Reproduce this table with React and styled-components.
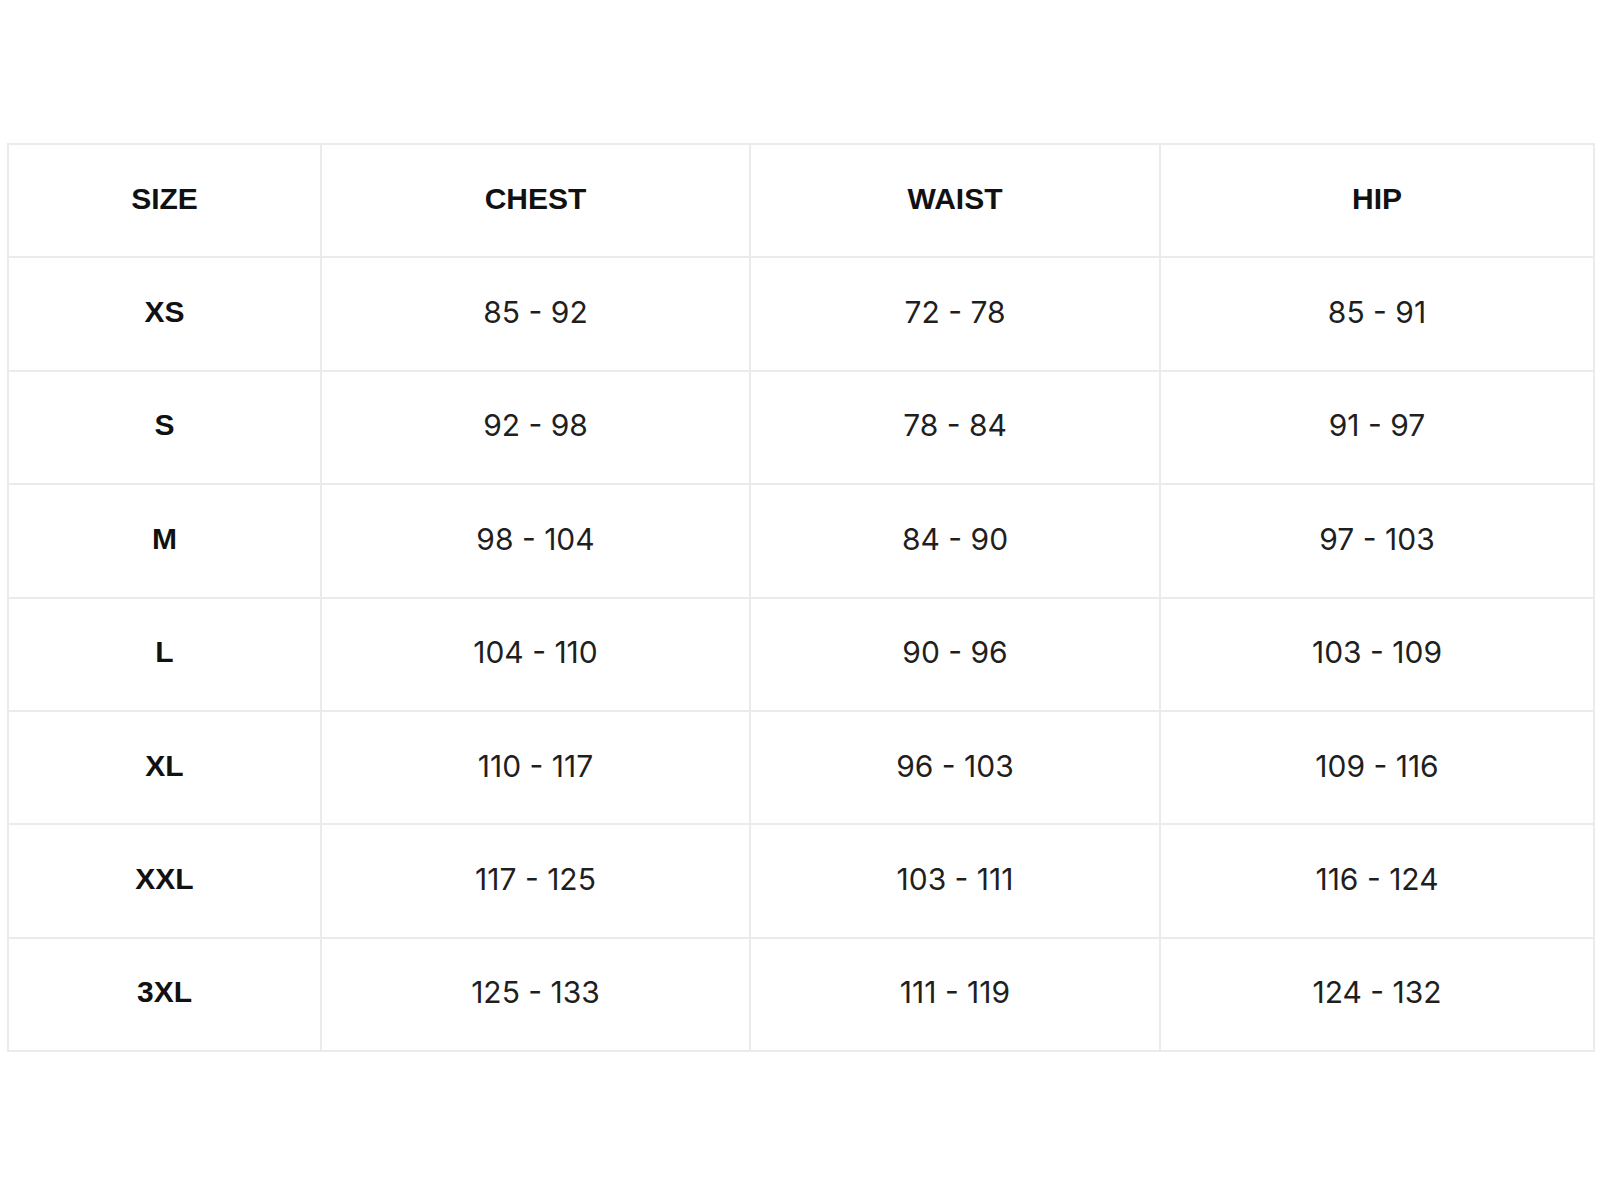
import React from "react"
import styled, { createGlobalStyle } from "styled-components"

const GlobalStyle = createGlobalStyle`
    html, body {
        margin: 0;
        padding: 0;
        background: #fff;
    }
    body {
        width: 1600px;
        height: 1200px;
    }
`

const Page = styled.div`
    padding: 143px 0 0 7px;
`

const Table = styled.div`
    display: grid;
    grid-template-columns: 313px 429px 410px 434px;
    grid-auto-rows: 113.4px;
    width: max-content;
    border-top: 2px solid #ebebeb;
    border-left: 2px solid #ebebeb;
`

const Cell = styled.div`
    box-sizing: border-box;
    display: flex;
    align-items: center;
    justify-content: center;
    border-right: 2px solid #ebebeb;
    border-bottom: 2px solid #ebebeb;
    font-family: ${(p) => (p.$bold ? '"Liberation Sans", Arial' : "Inter, \"Liberation Sans\"")}, sans-serif;
    font-weight: ${(p) => (p.$bold ? 700 : 400)};
    font-size: 30px;
    color: ${(p) => (p.$bold ? "#111" : "#1f1f1f")};
    padding-bottom: 4px;
`

const headers = ["SIZE", "CHEST", "WAIST", "HIP"]

const rows = [
    ["XS", "85 - 92", "72 - 78", "85 - 91"],
    ["S", "92 - 98", "78 - 84", "91 - 97"],
    ["M", "98 - 104", "84 - 90", "97 - 103"],
    ["L", "104 - 110", "90 - 96", "103 - 109"],
    ["XL", "110 - 117", "96 - 103", "109 - 116"],
    ["XXL", "117 - 125", "103 - 111", "116 - 124"],
    ["3XL", "125 - 133", "111 - 119", "124 - 132"],
]

export default function App() {
    return (
        <>
            <GlobalStyle />
            <Page>
                <Table>
                    {headers.map((h) => (
                        <Cell key={h} $bold>{h}</Cell>
                    ))}
                    {rows.map((row) =>
                        row.map((v, i) => (
                            <Cell key={row[0] + i} $bold={i === 0}>{v}</Cell>
                        ))
                    )}
                </Table>
            </Page>
        </>
    )
}
